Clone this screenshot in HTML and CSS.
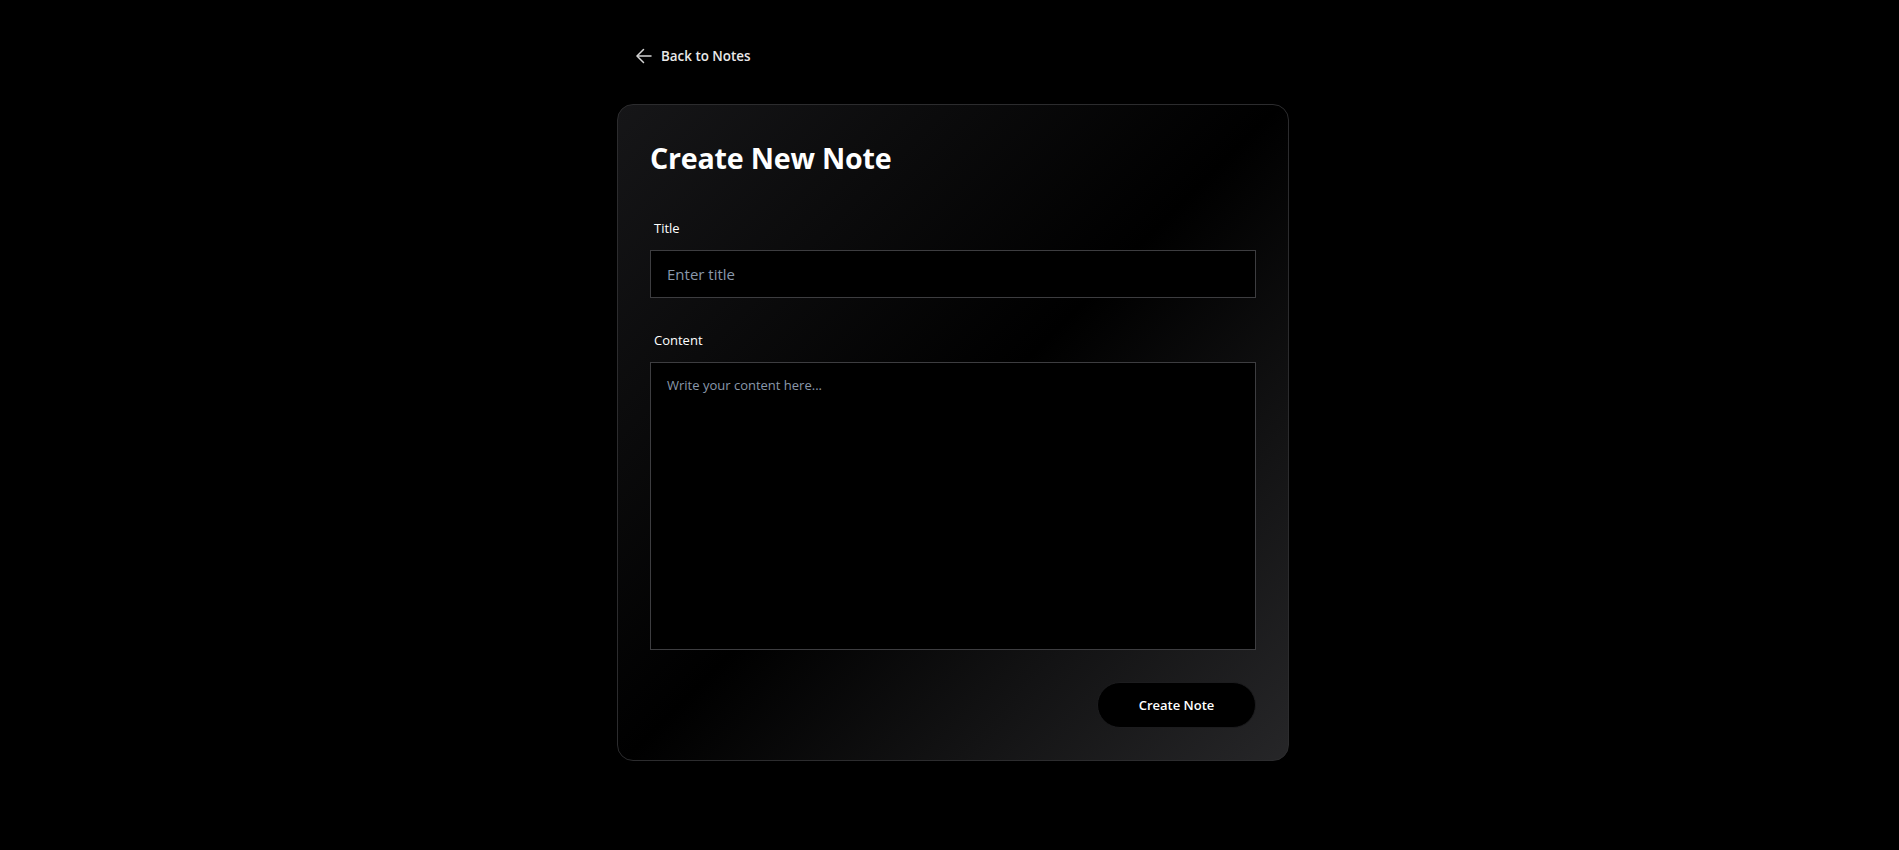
FILE: index.html
```html
<!DOCTYPE html>
<html lang="en">
<head>
<meta charset="utf-8">
<title>Create New Note</title>
<link rel="stylesheet" href="styles.css">
</head>
<body>
<div class="page">
  <a class="back" href="#">
    <svg class="back-icon" width="16" height="16" viewBox="0 0 16 16" fill="none" stroke="currentColor" stroke-width="1.5" stroke-linecap="round" stroke-linejoin="round"><path d="M15 8H1.5"/><path d="M7.5 1.5 1 8l6.5 6.5"/></svg>
    <span>Back to Notes</span>
  </a>
  <div class="card">
    <h1 class="card-title">Create New Note</h1>
    <form class="form">
      <div class="field">
        <label class="label" for="title">Title</label>
        <input class="input" id="title" type="text" placeholder="Enter title">
      </div>
      <div class="field">
        <label class="label" for="content">Content</label>
        <textarea class="textarea" id="content" placeholder="Write your content here..."></textarea>
      </div>
      <div class="actions">
        <button class="btn" type="button">Create Note</button>
      </div>
    </form>
  </div>
</div>
</body>
</html>
```

FILE: styles.css
```css
* { box-sizing: border-box; }
html, body { margin: 0; padding: 0; background: #000; }
body {
  font-family: "Open Sans", "Noto Sans", sans-serif;
  color: #fff;
  min-height: 850px;
}
.page {
  width: 679px;
  margin: 0 auto;
  padding: 46px 0 0 7px;
}
.back {
  display: inline-flex;
  align-items: center;
  gap: 9px;
  margin-left: 19px;
  margin-bottom: 38px;
  color: #e8e8e8;
  text-decoration: none;
  font-size: 13.4px;
  font-weight: 600;
  line-height: 20px;
}
.back-icon { color: #d4d4d4; display: block; }
.card {
  width: 672px;
  border: 1px solid #2c2c2e;
  border-radius: 16px;
  padding: 32px;
  background: linear-gradient(135deg, #161618 0%, #000 50%, #262628 100%);
}
.card-title {
  margin: 3px 0 0 0;
  font-size: 28.6px;
  line-height: 36px;
  font-weight: 700;
  letter-spacing: -0.2px;
}
.form {
  margin-top: 42px;
  display: flex;
  flex-direction: column;
  gap: 32px;
}
.field { display: flex; flex-direction: column; gap: 12px; }
.label {
  padding-left: 4px;
  font-size: 13px;
  line-height: 20px;
  font-weight: 500;
  color: #fff;
}
.input, .textarea {
  width: 100%;
  background: #000;
  border: 1px solid #3d3d40;
  border-radius: 0;
  color: #fff;
  font-family: inherit;
  outline: none;
}
.input {
  height: 48px;
  padding: 0 16px;
  font-size: 15px;
}
.textarea {
  height: 288px;
  padding: 12px 16px;
  font-size: 13px;
  line-height: 20px;
  resize: none;
  display: block;
}
.input::placeholder, .textarea::placeholder { color: #8a98ab; opacity: 1; }
.actions { display: flex; justify-content: flex-end; }
.btn {
  height: 46px;
  width: 159px;
  border-radius: 9999px;
  border: 1px solid #1c1c1e;
  background: #000;
  color: #fff;
  font-family: inherit;
  font-size: 13px;
  font-weight: 600;
  cursor: pointer;
}
```
